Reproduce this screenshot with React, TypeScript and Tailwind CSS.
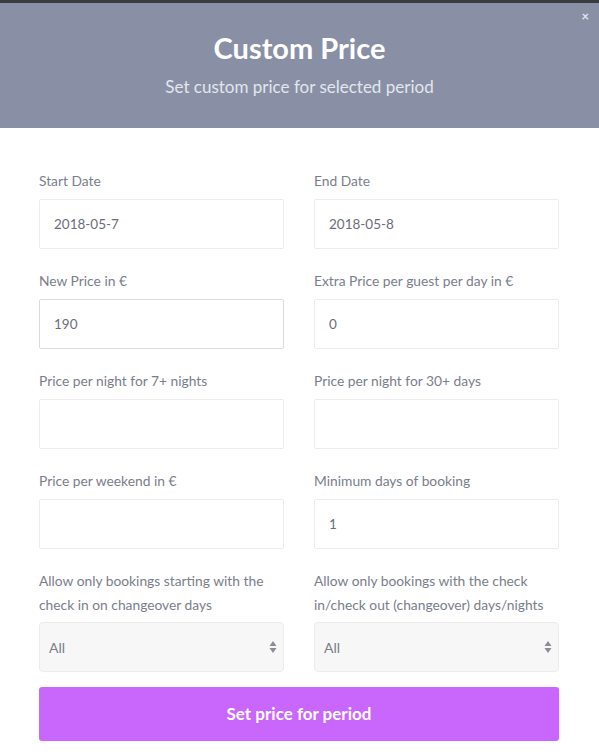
import React from 'react';

const Field = ({ label, value }: { label: string; value?: string }) => (
  <div className="flex flex-col">
    <label className="mb-[6px] text-[13.8px] leading-[24px] text-[#7a7e8b]">{label}</label>
    <input
      readOnly
      value={value ?? ''}
      className={`h-[50px] w-full rounded-[2px] border bg-white px-[14px] text-[13.5px] text-[#6b6e78] outline-none ${
        value === '190' ? 'border-[#d9dbe2]' : 'border-[#ececec]'
      }`}
    />
  </div>
);

const SelectField = ({ label }: { label: string }) => (
  <div className="flex flex-col">
    <label className="mb-[5px] text-[13.8px] leading-[24px] text-[#7a7e8b]">{label}</label>
    <div className="flex h-[50px] w-full items-center justify-between rounded-[4px] border border-[#ececec] bg-[#f7f7f7] pl-[9px] pr-[6px]">
      <span className="text-[14px] text-[#7b7e88]">All</span>
      <svg width="8" height="14" viewBox="0 0 8 14" className="text-[#8a8d96]">
        <path d="M4 1 L7.5 6 H0.5 Z" fill="currentColor" />
        <path d="M4 13 L7.5 8 H0.5 Z" fill="currentColor" />
      </svg>
    </div>
  </div>
);

export default function App() {
  return (
    <div className="min-h-[752px] w-[599px] bg-white" style={{ fontFamily: 'Lato, "Open Sans", sans-serif' }}>
      <div className="h-[3px] bg-[#3a3b3f]" />
      {/* Header */}
      <div className="relative flex h-[125px] flex-col items-center bg-[#8990a5] pt-[27px]">
        <button className="absolute right-[10px] top-[7px] text-[13px] font-bold leading-none text-[#e2e5ec]">×</button>
        <h2 className="text-[29px] font-bold leading-[36px] text-white">Custom Price</h2>
        <p className="mt-[9px] text-[17px] leading-[24px] text-[#e3e6ee]">Set custom price for selected period</p>
      </div>

      {/* Form */}
      <div className="pl-[39px] pr-[40px] pt-[41px]">
        <div className="grid grid-cols-2 gap-x-[30px] gap-y-[20px]">
          <Field label="Start Date" value="2018-05-7" />
          <Field label="End Date" value="2018-05-8" />
          <Field label="New Price in €" value="190" />
          <Field label="Extra Price per guest per day in €" value="0" />
          <Field label="Price per night for 7+ nights" />
          <Field label="Price per night for 30+ days" />
          <Field label="Price per weekend in €" />
          <Field label="Minimum days of booking" value="1" />
          <SelectField label="Allow only bookings starting with the check in on changeover days" />
          <SelectField label="Allow only bookings with the check in/check out (changeover) days/nights" />
        </div>
        <button className="mt-[15px] h-[54px] w-full rounded-[3px] bg-[#c966fc] text-[17px] font-bold text-white">
          Set price for period
        </button>
      </div>
    </div>
  );
}
